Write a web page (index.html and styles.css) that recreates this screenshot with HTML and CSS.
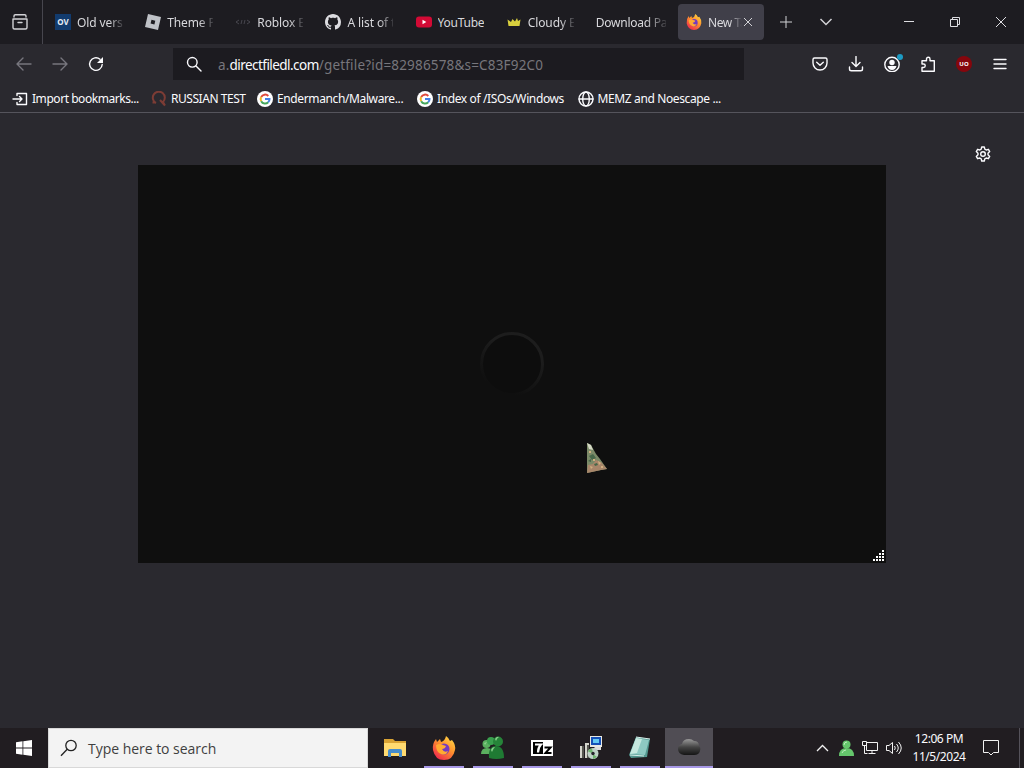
FILE: index.html
```html
<!DOCTYPE html>
<html lang="en">
<head>
    <meta charset="UTF-8" />
    <meta name="viewport" content="width=device-width, initial-scale=1.0"/>
    <title>New Tab</title>
    <link rel="stylesheet" href="styles.css">
</head>
<body>

<header class="tabstrip">
    <div class="tabview">
        <svg class="ico" viewBox="0 0 18 18"><path d="M3 4V3q0-1.300 1.300-1.300h9.400Q15 1.700 15 3v1M2 6h14v8.500q0 1.500-1.500 1.500h-11Q2 16 2 14.500zM7 9.500h4"/></svg>
    </div>
    <div class="tab">
        <span class="ov">OV</span>
        <span class="label">Old version</span>
    </div>
    <div class="tab">
        <svg viewBox="0 0 16 16"><path fill="#bfc2c7" fill-rule="evenodd" d="M3 0l13 3-3 13L0 13zM6.500 5.800l-.9 3.700 3.800.9.9-3.700z"/></svg>
        <span class="label">Theme Park</span>
    </div>
    <div class="tab">
        <svg viewBox="0 0 16 16"><path fill="none" stroke="#47464e" d="M4 6L1 8l3 2M12 6l3 2-3 2M6 10l1-4M9 10l1-4"/></svg>
        <span class="label">Roblox Exploits</span>
    </div>
    <div class="tab">
        <svg viewBox="0 0 16 16"><path fill="#dcdce0" d="M8 0C3.580 0 0 3.580 0 8c0 3.540 2.290 6.530 5.470 7.590.4.070.55-.17.55-.38 0-.19-.01-.82-.01-1.490-2.010.37-2.530-.49-2.690-.94-.09-.23-.48-.94-.82-1.130-.28-.15-.68-.52-.01-.53.63-.01 1.080.58 1.230.82.72 1.210 1.870.87 2.330.66.070-.52.28-.87.51-1.070-1.780-.2-3.640-.89-3.640-3.950 0-.87.31-1.590.82-2.150-.08-.2-.36-1.020.08-2.120 0 0 .67-.21 2.200.82.640-.18 1.320-.27 2-.27s1.360.09 2 .27c1.530-1.040 2.200-.82 2.200-.82.440 1.100.160 1.920.080 2.120.510.560.820 1.270.820 2.150 0 3.070-1.870 3.750-3.650 3.950.290.250.540.730.540 1.480 0 1.070-.01 1.930-.01 2.200 0 .210.150.460.550.380A8 8 0 0016 8c0-4.420-3.580-8-8-8z"/></svg>
        <span class="label">A list of the</span>
    </div>
    <div class="tab">
        <svg viewBox="0 0 16 16"><rect y="2.500" width="16" height="11" rx="3" fill="#d20a35"/><path fill="#fff" d="M6.500 5.800v4.400L10.300 8z"/></svg>
        <span class="label full">YouTube</span>
    </div>
    <div class="tab">
        <svg viewBox="0 0 16 16"><path fill="#d8cf3e" d="M1.500 5.500L5 8l1.500-3L9 7.500 11 4l1 3 2.500-1.500L13.500 12h-11z"/></svg>
        <span class="label">Cloudy Experience</span>
    </div>
    <div class="tab">
        <span class="label wide">Download Page</span>
    </div>
    <div class="tab selected">
        <svg viewBox="0 0 24 24"><use href="#firefox"/></svg>
        <span class="label">New Tab</span>
        <svg class="close" viewBox="0 0 10 10"><path d="M1 1l8 8M9 1L1 9"/></svg>
    </div>
    <svg class="strip-btn plus" viewBox="0 0 14 14"><path d="M7 1v12M1 7h12"/></svg>
    <svg class="strip-btn" viewBox="0 0 14 14"><path stroke-width="1.500" d="M1.500 4L7 9.500 12.500 4"/></svg>
    <div class="winbtns">
        <svg viewBox="0 0 12 12"><path d="M1 5.500h10"/></svg>
        <svg viewBox="0 0 12 12"><path d="M1.500 3.500h7v7h-7zM3.500 3.500v-2h7v7h-2"/></svg>
        <svg viewBox="0 0 12 12"><path d="M1 1l10 10M11 1L1 11"/></svg>
    </div>
</header>

<nav class="toolbar">
    <div class="navbtns">
        <svg class="ico dim" viewBox="0 0 16 16"><path d="M15 8H1.500M7 2L1 8l6 6"/></svg>
        <svg class="ico dim" viewBox="0 0 16 16"><path d="M1 8h13.500M9 2l6 6-6 6"/></svg>
        <svg class="ico" viewBox="0 0 16 16"><path d="M14.200 8.500A6.300 6.300 0 1 1 12 3.300"/><path fill="#fbfbfe" stroke="none" d="M15 1v6H9z"/></svg>
    </div>
    <div class="urlbar">
        <svg class="ico" viewBox="0 0 16 16"><circle cx="6.300" cy="6.300" r="4.800"/><path d="M10 10l5 5"/></svg>
        <span class="url">a.<b>directfiledl.com</b>/getfile?id=82986578&amp;s=C83F92C0</span>
    </div>
    <div class="actions">
        <svg class="ico" viewBox="0 0 16 16"><path d="M2.500 2h11q1.500 0 1.500 1.500V7A7 7 0 0 1 1 7V3.500Q1 2 2.500 2zM4.700 6.200L8 9.300l3.300-3.100"/></svg>
        <svg class="ico" viewBox="0 0 16 16"><path d="M8 .5V10M4 6.500l4 4 4-4M1.500 11v2q0 1.800 1.800 1.800h9.400q1.800 0 1.800-1.800v-2"/></svg>
        <span class="account">
            <svg class="ico" viewBox="0 0 16 16"><circle cx="8" cy="8.500" r="7.200"/><circle cx="8" cy="6.500" r="2.700" fill="#fbfbfe" stroke="none"/><path fill="#fbfbfe" stroke="none" d="M3.500 10h9q-1 4-4.500 4t-4.500-4z"/></svg>
            <i class="dot"></i>
        </span>
        <svg class="ico" viewBox="0 0 16 16"><path d="M2 15.200V11.500h1.500a1.700 1.700 0 0 0 0-3.500H2V4.800h4.500V3a1.700 1.700 0 0 1 3.500 0v1.800h4.300v10.400z"/></svg>
        <span class="shield">UO</span>
        <svg class="ico" viewBox="0 0 16 16"><path d="M2 3.500h12M2 8h12M2 12.500h12"/></svg>
    </div>
</nav>

<nav class="bookmarks">
    <a class="bm-import"><svg class="ico" viewBox="0 0 16 16"><path d="M5 4.500V2.500h9.500v11H5v-2M1 8h9M7.500 5.500L10 8l-2.500 2.500"/></svg><span>Import bookmarks...</span></a>
    <a class="bm-test"><svg viewBox="0 0 16 16"><path fill="none" stroke="#7c3c35" stroke-width="2" d="M4 11.500H1.500M5 12A6 6 0 1 1 12 11l2 3.500M9 9l5 5.500"/></svg><span>RUSSIAN TEST</span></a>
    <a class="bm-malware"><svg viewBox="0 0 16 16"><use href="#google"/></svg><span>Endermanch/Malware...</span></a>
    <a class="bm-isos"><svg viewBox="0 0 16 16"><use href="#google"/></svg><span>Index of /ISOs/Windows</span></a>
    <a class="bm-memz"><svg class="ico" viewBox="0 0 16 16"><circle cx="8" cy="8" r="7"/><ellipse cx="8" cy="8" rx="3.300" ry="7"/><path d="M1 8h14"/></svg><span>MEMZ and Noescape ...</span></a>
</nav>

<main class="page">
    <svg class="ico gear" viewBox="0 0 16 16"><path d="M6.700 1h2.600l.5 2.200 1.400.8 2.200-.7 1.300 2.300L13 7.200v1.600l1.700 1.600-1.300 2.300-2.200-.7-1.400.8-.5 2.200H6.700l-.5-2.200-1.400-.8-2.200.7-1.300-2.300L3 8.800V7.200L1.300 5.600l1.300-2.300 2.200.7 1.400-.8z"/><circle cx="8" cy="8" r="2.300"/></svg>
    <section class="panel">
        <svg class="spinner" viewBox="0 0 66 66"><defs><linearGradient id="fade" x1=".7" y1=".1" x2=".3" y2="1"><stop offset=".2" stop-color="#1d1d1d"/><stop offset=".9" stop-color="#0f0f0f"/></linearGradient></defs><circle cx="33" cy="33" r="30.500" fill="#0d0d0d" stroke="url(#fade)" stroke-width="3"/></svg>
        <svg class="grip" viewBox="0 0 12 12"><path fill="#fff" d="M9 0h2v2H9zM9 3h2v2H9zM9 6h2v2H9zM9 9h2v2H9zM6 3h2v2H6zM6 6h2v2H6zM6 9h2v2H6zM3 6h2v2H3zM3 9h2v2H3zM0 9h2v2H0z"/></svg>
    </section>
    <svg class="cursor" viewBox="0 0 22 30"><path fill="#7b8a68" d="M1 0l4 2 5 9 4 5 7 10-6 1-14 3z"/><path fill="#a8866a" d="M2 22l5-1 3-4 5 2 6 7-6 1-14 3z"/><path fill="#d5d9c5" d="M1 0l4 2 2 5-4-1z"/><path fill="#47684a" d="M3 13l4-2 3 4-4 2zM8 21l3-1 1 2-3 1zM2 18l3-2v3z"/><path fill="#d0b080" d="M7 16h2v2H7zM12 18l3 2-2 2zM4 23l3 1-2 2zM3 8h2v2H3zM15 23h2v2h-2z"/></svg>
</main>

<footer class="taskbar">
    <div class="start">
        <svg viewBox="0 0 16 16"><path fill="#fff" d="M0 2.200l6.500-.9v6.200H0zM7.300 1.200L16 0v7.500H7.300zM0 8.400h6.500v6.300L0 13.800zM7.300 8.400H16V16l-8.700-1.200z"/></svg>
    </div>
    <div class="search">
        <svg viewBox="0 0 18 18"><circle cx="11" cy="6.500" r="5.200"/><path d="M7.200 10.300L1 16.800"/></svg>
        <span>Type here to search</span>
    </div>
    <div class="apps">
        <div class="app"><svg viewBox="0 0 24 24"><path fill="#d9a334" d="M1 3h9l2 2h11v15H1z"/><path fill="#ffda70" d="M1 7h22v13H1z"/><path fill="#468dcc" d="M5 21v-6q0-2 2-2h10q2 0 2 2v6h-3v-4H8v4z"/></svg></div>
        <div class="app open"><svg viewBox="0 0 24 24">
            <defs><linearGradient id="flame" x1=".9" y1="0" x2=".2" y2="1"><stop offset="0" stop-color="#ffdf48"/><stop offset=".45" stop-color="#ff932d"/><stop offset="1" stop-color="#ee234f"/></linearGradient></defs>
            <g id="firefox"><path fill="url(#flame)" d="M14 0q3 2 4 5l2-1q4 5 3 10-2 10-11 10T1 14Q0 8 4 3l1 3 3-3 1 3q4-1 5-6z"/><circle cx="12" cy="13" r="5.500" fill="#753ac0"/><path fill="#ffab31" d="M4 9q4-2 7 0l3 1q-1 3-4 3 2 4 6 2-2 5-7 3-5-2-5-9z"/></g>
        </svg></div>
        <div class="app open"><svg viewBox="0 0 24 24"><g fill="#5bb05f"><circle cx="5.500" cy="8" r="4"/><path d="M0 18q0-6 6-6t6 6z"/></g><circle cx="10" cy="5" r="4" fill="#3aa04e"/><circle cx="17" cy="5.500" r="5" fill="#268439"/><path fill="#1f7a33" d="M8 22q-1-12 7-12t8 12q-8 2-15 0z"/><path fill="#8bd08c" d="M14 3q2-3 4-2-2 1-3 4zM3 7l3-1-2 3zM10 14q1-3 4-3-2 2-3 5z"/></svg></div>
        <div class="app open"><svg viewBox="0 0 24 24"><path fill="#fff" d="M1 4h22v16H1z"/><path fill="#000" d="M3 6h10v12H3z"/><path fill="none" stroke="#fff" stroke-width="2.200" d="M5 8.500h6q-3 3-3 8"/><path fill="none" stroke="#000" stroke-width="2" d="M14.500 11.500h6l-5 5.500h6"/></svg></div>
        <div class="app open"><svg viewBox="0 0 24 24"><path fill="#d4d4cc" d="M1 10h4v12H1zM6 7h4v15H6z"/><path fill="#55554f" d="M3 10h2v12H3zM8 9h2v13H8z"/><path fill="#e9e9e4" d="M11 0h12v11H11z"/><path fill="#1551b8" d="M12 1h10v8H12z"/><path fill="#65caf4" d="M14 3h6v4h-6z"/><path fill="#ddd" d="M16 11h6v3h-9z"/><circle cx="14" cy="17.500" r="5.500" fill="#bfd1c7"/><path fill="#6fb46f" d="M14 17.500l-5-2q1-3 4-3zM14 18l4 3-4 2z"/><circle cx="14" cy="17.500" r="1.700" fill="#24222a"/></svg></div>
        <div class="app open"><svg viewBox="0 0 24 24"><path fill="#53978f" d="M8 1l14 2-3 18-16 1-2-3z"/><path fill="#8ec9c2" d="M8 2l13 2-4 15-15-1z"/><path fill="#c6e8df" d="M8 2l6 1-5 14-7 1z"/><path fill="none" stroke="#d6eeea" d="M8 1l14 2M2 19l14 1"/></svg></div>
        <div class="app open active"><svg viewBox="0 0 24 24"><defs><linearGradient id="rock" x2="0" y2="1"><stop stop-color="#999"/><stop offset=".5" stop-color="#454545"/><stop offset="1" stop-color="#151515"/></linearGradient></defs><path fill="url(#rock)" d="M1 13q0-4 4-5 1-5 7-5 3 0 5 2 5 0 5 5 2 1 1 5-1 4-6 4H7q-6-1-6-6z"/></svg></div>
    </div>
    <div class="tray">
        <svg viewBox="0 0 16 16"><path stroke-width="1.300" d="M3 11l5.500-5.500L14 11"/></svg>
        <svg viewBox="0 0 16 16"><g fill="#65c66c" stroke="none"><circle cx="8.500" cy="4.500" r="4"/><path d="M1 16q0-8 7.500-8t7.500 8z"/></g><path stroke="#bceebc" d="M6 5q0-3 3-3M4 13q1-3 4-3"/></svg>
        <svg viewBox="0 0 16 16"><path d="M4.500 2.500h11v8h-11zM10 10.500v3M6.500 13.500h7M.5 1.500h4v4h-4zM2.500 5.500v8h3"/></svg>
        <svg viewBox="0 0 16 16"><path d="M.5 5.500H3l3.500-3v11l-3.500-3H.5zM8.500 6q1.500 2 0 4M10.500 4q3.500 4 0 8M12.500 2q5.500 6 0 12"/></svg>
        <div class="clock">12:06 PM<br>11/5/2024</div>
        <svg class="notes" viewBox="0 0 18 18"><path d="M1.500 1.500h15v12h-5l-2.500 2.500-2.500-2.500h-5z"/></svg>
        <i class="peek"></i>
    </div>
</footer>

<svg class="defs">
    <g id="google"><circle cx="8" cy="8" r="8" fill="#fff"/><g fill="none" stroke-width="2"><path stroke="#e04b3d" d="M4.200 6A4.400 4.400 0 0 1 11.300 5"/><path stroke="#edb92c" d="M4.200 6a4.500 4.500 0 0 0 0 4.200"/><path stroke="#45a65b" d="M4.200 10.200a4.400 4.400 0 0 0 7 1"/><path stroke="#4481e5" d="M8 8h4.500q0 2-1.300 3.200"/></g></g>
</svg>

</body>
</html>
```
FILE: styles.css
```css
* { box-sizing: border-box; }
body {
    margin: 0;
    width: 1024px;
    height: 768px;
    display: flex;
    flex-direction: column;
    overflow: hidden;
    font: 12px "Noto Sans", "Open Sans", sans-serif;
    color: #fbfbfe;
    background: #2a292f;
}
svg { display: block; flex: none; }
.defs { position: absolute; width: 0; height: 0; }
.ico {
    width: 16px;
    height: 16px;
    fill: none;
    stroke: #fbfbfe;
    stroke-width: 1.4;
    stroke-linejoin: round;
    stroke-linecap: round;
}
.dim { stroke: #77767e; }

/* tabs */
.tabstrip {
    height: 44px;
    flex: none;
    display: flex;
    align-items: center;
    background: #1d1c21;
}
.tabview {
    width: 43px;
    height: 44px;
    margin-right: 4px;
    padding: 13px 0 0 11px;
    border-right: 1px solid #47464e;
}
.tabview .ico { width: 18px; height: 18px; stroke: #d2d2d6; }
.tab {
    width: 90.15px;
    height: 36px;
    flex: none;
    padding: 0 14px 0 8px;
    display: flex;
    align-items: center;
    gap: 6px;
}
.tab svg { width: 16px; height: 16px; }
.label {
    width: 46px;
    overflow: hidden;
    white-space: nowrap;
    color: #d8d8dc;
    letter-spacing: -0.1px;
    -webkit-mask-image: linear-gradient(to right, #000 70%, rgba(0, 0, 0, 0.15));
    mask-image: linear-gradient(to right, #000 70%, rgba(0, 0, 0, 0.15));
}
.label.full { width: 50px; letter-spacing: -0.25px; mask: none; -webkit-mask: none; }
.label.wide { width: 70px; flex: none; letter-spacing: -0.25px; }
.ov {
    width: 16px;
    height: 16px;
    background: #123b6e;
    color: #e6edf5;
    font: bold 8px/16px "Noto Sans", sans-serif;
    text-align: center;
}
.tab.selected {
    width: 86px;
    padding-right: 8px;
    background: #403f49;
    border-radius: 4px;
}
.selected .label {
    width: 34px;
    letter-spacing: -0.4px;
    -webkit-mask-image: linear-gradient(to right, #000 65%, transparent);
    mask-image: linear-gradient(to right, #000 65%, transparent);
}
.tab .close { width: 10px; height: 10px; margin-left: -5px; stroke: #d2d2d6; }
.strip-btn {
    width: 14px;
    height: 14px;
    margin-left: 26px;
    fill: none;
    stroke: #d2d2d6;
}
.strip-btn.plus { margin-left: 15px; }
.winbtns {
    margin-left: auto;
    padding-right: 17px;
    display: flex;
    gap: 34px;
}
.winbtns svg { width: 12px; height: 12px; fill: none; stroke: #dedee2; }

/* address bar */
.toolbar {
    height: 40px;
    flex: none;
    display: flex;
    align-items: center;
}
.navbtns { width: 173px; padding-left: 16px; display: flex; gap: 20px; }
.urlbar {
    width: 571px;
    height: 32px;
    padding-left: 13px;
    display: flex;
    align-items: center;
    gap: 16px;
    background: #1c1b20;
}
.url {
    padding-top: 1px;
    font-size: 13.5px;
    color: #77767c;
    white-space: nowrap;
    letter-spacing: 0.18px;
}
.url b { font-weight: normal; color: #fbfbfe; letter-spacing: -0.55px; }
.actions {
    margin-left: auto;
    padding-right: 16px;
    display: flex;
    align-items: center;
    gap: 20px;
}
.account { position: relative; }
.dot {
    position: absolute;
    top: -2px;
    right: -3px;
    width: 6px;
    height: 6px;
    border-radius: 50%;
    background: #1d9bc4;
}
.shield {
    width: 16px;
    height: 16px;
    border-radius: 50%;
    background: #86060d;
    font: bold 6px/16px "Noto Sans", sans-serif;
    text-align: center;
}

/* bookmarks */
.bookmarks {
    height: 29px;
    flex: none;
    padding: 1px 0 0 12px;
    display: grid;
    grid-template-columns: 139px 106px 160px 160.5px 160px;
    align-items: center;
    border-bottom: 1px solid #55545c;
}
.bookmarks a { display: flex; align-items: center; gap: 4px; white-space: nowrap; }
.bookmarks svg { width: 16px; height: 16px; }
.bookmarks span { letter-spacing: -0.38px; }
.bm-import span, .bm-test span { letter-spacing: -0.45px; }

/* content */
.page {
    height: 615px;
    flex: none;
    display: flex;
    flex-direction: column;
    align-items: center;
    position: relative;
}
.gear { align-self: flex-end; margin: 33px 33px 3px 0; }
.panel {
    width: 748px;
    height: 398px;
    position: relative;
    display: flex;
    align-items: center;
    justify-content: center;
    background: #0f0f0f;
}
.spinner { width: 66px; height: 66px; }
.grip { position: absolute; right: 1px; bottom: 1px; width: 12px; height: 12px; }
.cursor { position: absolute; left: 586px; top: 330px; width: 22px; height: 30px; }

/* taskbar */
.taskbar {
    height: 40px;
    flex: none;
    display: flex;
    background: #211d21;
}
.start { width: 48px; padding: 12px 16px; }
.start svg { width: 16px; height: 16px; }
.search {
    width: 320px;
    display: flex;
    align-items: center;
    gap: 10px;
    padding-left: 11px;
    background: #f3f3f3;
    border: 1px solid #d8d8d8;
    color: #3f3f3f;
    font: 14px "Open Sans", "Noto Sans", sans-serif;
}
.search svg { width: 18px; height: 18px; fill: none; stroke: #222; stroke-width: 1.3; }
.search span { letter-spacing: -0.03px; }
.apps { display: flex; gap: 1px; margin-left: 3px; }
.app { width: 48px; height: 40px; padding: 8px 12px 6px; }
.app svg { width: 24px; height: 24px; }
.open {
    background: linear-gradient(#a798e6, #a798e6) center bottom / 40px 2px no-repeat;
}
.open.active { background-size: 48px 2px; background-color: #504d54; }
.tray {
    margin-left: auto;
    display: flex;
    align-items: center;
    gap: 8px;
    padding-right: 4px;
}
.tray svg { width: 16px; height: 16px; fill: none; stroke: #f2f2f2; }
.clock {
    width: 56px;
    margin-left: 1px;
    line-height: 18px;
    text-align: center;
    white-space: nowrap;
    letter-spacing: -0.45px;
}
.tray .notes { width: 18px; height: 18px; margin-left: 7px; }
.peek { width: 1px; height: 40px; margin-left: 11px; background: #55525a; }
```
